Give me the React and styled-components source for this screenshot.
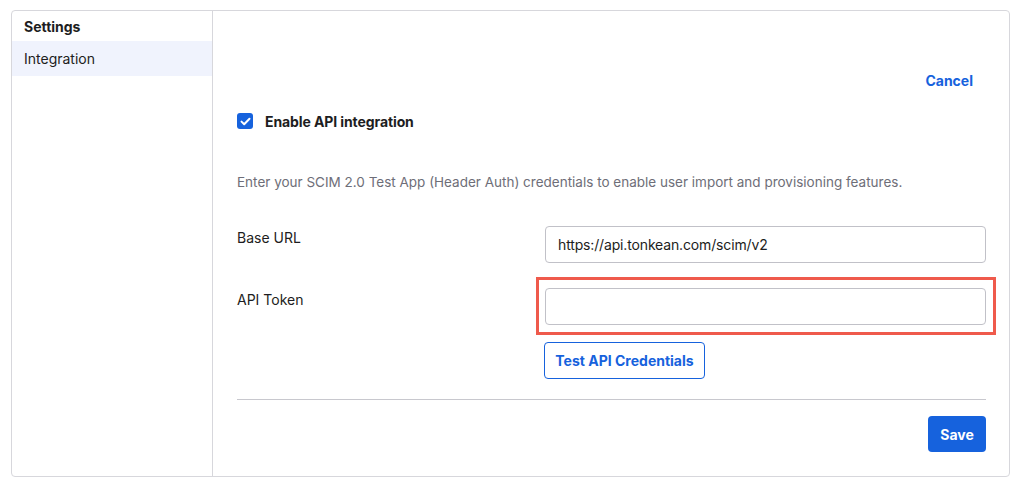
import styled, { createGlobalStyle } from "styled-components";

const Global = createGlobalStyle`
  body {
    margin: 0;
    background: #ffffff;
    font-family: Inter, "Noto Sans", "Liberation Sans", sans-serif;
    color: #1d1d21;
  }
`;

function App() {
  return (
    <>
      <Global />
      <Page>
        <Card>
          <Sidebar>
            <SideTitle>Settings</SideTitle>
            <SideItem active>Integration</SideItem>
          </Sidebar>

          <Main>
            <Header>
              <LinkButton>Cancel</LinkButton>
            </Header>

            <CheckRow>
              <Check>
                <svg width="11" height="9" viewBox="0 0 11 9">
                  <path d="M1.5 4.6 L4.2 7.2 L9.5 1.8" fill="none" stroke="#fff" strokeWidth="2" strokeLinecap="round" strokeLinejoin="round" />
                </svg>
              </Check>
              <CheckLabel>Enable API integration</CheckLabel>
            </CheckRow>

            <Description>
              Enter your SCIM 2.0 Test App (Header Auth) credentials to enable user import and provisioning features.
            </Description>

            <Field gap={34}>
              <Label>Base URL</Label>
              <Input defaultValue="https://api.tonkean.com/scim/v2" />
            </Field>

            <Field gap={25}>
              <Label>API Token</Label>
              <Highlight>
                <Input />
              </Highlight>
            </Field>

            <ButtonRow>
              <OutlineButton>Test API Credentials</OutlineButton>
            </ButtonRow>

            <Divider />

            <Footer>
              <PrimaryButton>Save</PrimaryButton>
            </Footer>
          </Main>
        </Card>
      </Page>
    </>
  );
}
export default App;

const Page = styled.div`
  padding: 10px 13px 13px 11px;
  height: 490px;
  box-sizing: border-box;
`;

const Card = styled.div`
  display: flex;
  height: 467px;
  box-sizing: border-box;
  border: 1px solid #d7d7dc;
  border-radius: 4px;
`;

const Sidebar = styled.div`
  width: 200px;
  border-right: 1px solid #d7d7dc;
  display: flex;
  flex-direction: column;
`;

const SideTitle = styled.div`
  height: 30px;
  display: flex;
  align-items: center;
  padding-left: 12px;
  font-size: 14px;
  font-weight: 700;
  color: #1d1d21;
`;

const SideItem = styled.div`
  height: 35px;
  display: flex;
  align-items: center;
  padding-left: 12px;
  font-size: 14px;
  color: #1d1d21;
  background: ${(p) => (p.active ? "#f0f3fd" : "transparent")};
`;

const Main = styled.div`
  flex: 1;
  padding: 0 23px 0 24px;
  display: flex;
  flex-direction: column;
`;

const Header = styled.div`
  margin-top: 60px;
  height: 20px;
  display: flex;
  justify-content: flex-end;
  padding-right: 13px;
`;

const LinkButton = styled.span`
  font-size: 14px;
  font-weight: 700;
  color: #1662dd;
  line-height: 20px;
  cursor: pointer;
`;

const CheckRow = styled.div`
  margin-top: 20px;
  height: 20px;
  display: flex;
  align-items: center;
  gap: 12px;
`;

const Check = styled.div`
  width: 16px;
  height: 16px;
  border-radius: 3px;
  background: #1662dd;
  display: flex;
  align-items: center;
  justify-content: center;
`;

const CheckLabel = styled.span`
  font-size: 14px;
  font-weight: 700;
  color: #1d1d21;
  letter-spacing: -0.1px;
`;

const Description = styled.p`
  margin: 41px 0 0;
  line-height: 20px;
  font-size: 13.5px;
  color: #6e6e78;
`;

const Field = styled.div`
  margin-top: ${(p) => p.gap}px;
  display: flex;
  align-items: flex-start;
`;

const Label = styled.div`
  width: 308px;
  flex-shrink: 0;
  padding-top: 2px;
  line-height: 20px;
  font-size: 14px;
  color: #1d1d21;
`;

const Highlight = styled.div`
  position: relative;
  flex: 1;
  display: flex;
  &::after {
    content: "";
    position: absolute;
    left: -9px;
    right: -10px;
    top: -11px;
    bottom: -10px;
    border: 3px solid #ef5a4c;
    pointer-events: none;
  }
`;

const Input = styled.input`
  flex: 1;
  height: 37px;
  box-sizing: border-box;
  border: 1px solid #c1c1c8;
  border-radius: 4px;
  padding: 0 12px;
  font-family: inherit;
  font-size: 14px;
  letter-spacing: -0.15px;
  color: #1d1d21;
  outline: none;
`;

const ButtonRow = styled.div`
  margin-top: 17px;
  padding-left: 307px;
  display: flex;
`;

const OutlineButton = styled.button`
  height: 37px;
  width: 161px;
  box-sizing: border-box;
  background: #fff;
  border: 1px solid #1662dd;
  border-radius: 4px;
  font-family: inherit;
  font-size: 14px;
  font-weight: 700;
  color: #1662dd;
`;

const Divider = styled.div`
  margin-top: 20px;
  height: 1px;
  background: #c8c8ce;
`;

const Footer = styled.div`
  margin-top: 16px;
  display: flex;
  justify-content: flex-end;
`;

const PrimaryButton = styled.button`
  height: 36px;
  width: 58px;
  border: none;
  border-radius: 4px;
  background: #1662dd;
  font-family: inherit;
  font-size: 14px;
  font-weight: 700;
  color: #fff;
`;
